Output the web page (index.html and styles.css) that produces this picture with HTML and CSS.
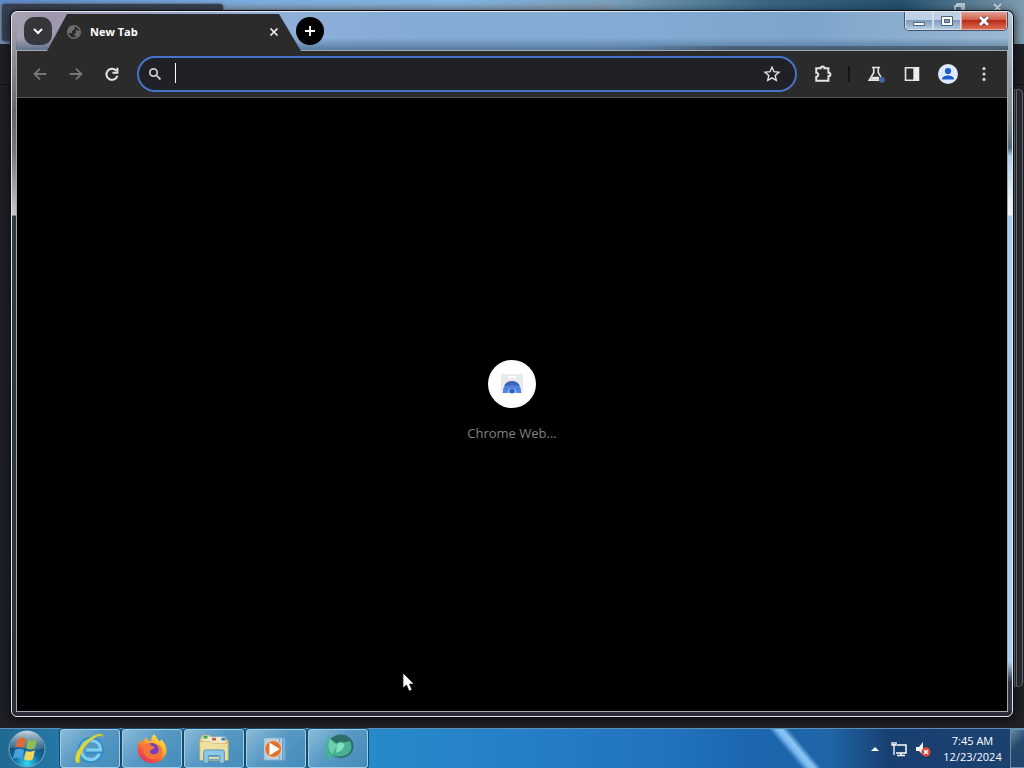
FILE: index.html
```html
<!DOCTYPE html>
<html lang="en">
<head>
<meta charset="utf-8">
<title>New Tab</title>
<link rel="stylesheet" href="styles.css">
</head>
<body>
<main class="desktop">
  <div class="back-window" aria-hidden="true">
    <div class="back-title"></div>
    <div class="back-tab"></div>
    <div class="back-line"></div>
    <svg class="back-glyphs" viewBox="0 0 60 12"><g fill="none" stroke="#d5e2ea" stroke-width="1.5"><path d="M11 10V6h7v5M13 6V4h7v7"/><path d="M50 4l7 7M57 4l-7 7"/></g></svg>
    <div class="back-edge"></div>
  </div>

  <section class="window" aria-label="Browser">
    <header class="titlebar">
      <button class="tab-search" aria-label="Search tabs"><svg viewBox="0 0 16 16"><path d="M4 6l4 4 4-4" fill="none" stroke="#fff" stroke-width="2"/></svg></button>
      <div class="tab">
        <svg class="globe" viewBox="0 0 16 16"><circle cx="8" cy="8" r="6.300" fill="none" stroke="#6d6d6d" stroke-width="1.500"/><path d="M2 5l4-3 3 1-1 3-2 1v2H2zM10 6l4 1-1 5-3 1-2-3 2-1z" fill="#6d6d6d"/></svg>
        <span class="tab-title">New Tab</span>
        <button class="tab-close" aria-label="Close tab"><svg viewBox="0 0 16 16"><path d="M4.500 4.500l7 7M11.500 4.500l-7 7" stroke="#f1f1f1" stroke-width="1.700"/></svg></button>
      </div>
      <button class="new-tab" aria-label="New tab"><svg viewBox="0 0 16 16"><path d="M8 3v10M3 8h10" stroke="#fff" stroke-width="1.800"/></svg></button>
      <div class="controls">
        <button class="ctl minimize" aria-label="Minimize"><svg viewBox="0 0 16 14"><path d="M2.500 8.500h11v3h-11z" fill="#fff" stroke="#4b617d"/></svg></button>
        <button class="ctl maximize" aria-label="Maximize"><svg viewBox="0 0 16 14"><path d="M2.500 2.500h11v9h-11z" fill="#fff" stroke="#4b617d"/><path d="M5.500 5.500h5v3h-5z" fill="#89a2bc" stroke="#4b617d"/></svg></button>
        <button class="ctl close" aria-label="Close"><svg viewBox="0 0 16 14"><path d="M4 3l8 8M12 3l-8 8" stroke="#653438" stroke-width="4.500"/><path d="M4 3l8 8M12 3l-8 8" stroke="#fff" stroke-width="2.800"/></svg></button>
      </div>
    </header>
    <div class="client">
      <nav class="toolbar" aria-label="Browser toolbar">
        <button class="tool dim" aria-label="Back"><svg viewBox="0 0 20 20"><path d="M17 10H4M10 4L4 10l6 6"/></svg></button>
        <button class="tool dim" aria-label="Forward"><svg viewBox="0 0 20 20"><path d="M3 10h13M10 4l6 6-6 6"/></svg></button>
        <button class="tool" aria-label="Reload"><svg viewBox="0 0 20 20"><path class="bold" d="M15 6.500A6.200 6.200 0 1 0 16 12"/><path class="bold" d="M16 3v5.500h-5.500"/></svg></button>
        <div class="omnibox">
          <svg class="lens" viewBox="0 0 16 16"><circle cx="6.500" cy="6.500" r="3.700"/><path d="M9.200 9.200l4.300 4.300"/></svg>
          <input class="address" type="text" aria-label="Address and search bar">
          <button class="star" aria-label="Bookmark this tab"><svg viewBox="0 0 20 20"><path d="M10 3.200l2 4.500 5 .5-3.800 3.300 1.100 4.900L10 13.900l-4.300 2.500 1.100-4.900L3 8.200l5-.5z"/></svg></button>
        </div>
        <button class="tool" aria-label="Extensions"><svg viewBox="0 0 20 20"><path class="bold" d="M2.500 3.500h5c0-2.500 4-2.500 4 0h4.500v5c3 0 3 4 0 4v5H2.500v-4.500c3 0 3-4.500 0-4.500z"/></svg></button>
        <span class="divider"></span>
        <button class="tool" aria-label="Labs"><svg viewBox="0 0 20 20"><path d="M5.500 2.800h9M7.500 3v5.500L2.500 16.800h11M12.500 3v5.500l3 5"/><path d="M6 13h7l1 3H4z" fill="#e5e5e5" stroke="none"/><circle cx="16.500" cy="16.500" r="3.300" fill="#42699e" stroke="none"/></svg></button>
        <button class="tool" aria-label="Side panel"><svg viewBox="0 0 20 20"><path d="M2.800 3h14.400v14H2.800z"/><path d="M11.500 3h6v14h-6z" fill="#eee" stroke="none"/></svg></button>
        <button class="tool profile" aria-label="Profile"><svg viewBox="0 0 20 20"><circle cx="10" cy="10" r="10" fill="#dce8fb" stroke="none"/><circle cx="10" cy="7" r="3.100" fill="#1b5ccf" stroke="none"/><path d="M4 15.500c0-5.500 12-5.500 12 0z" fill="#1b5ccf" stroke="none"/></svg></button>
        <button class="tool" aria-label="Menu"><svg viewBox="0 0 20 20"><g fill="#d5d5d5" stroke="none"><circle cx="10" cy="4" r="1.800"/><circle cx="10" cy="10" r="1.800"/><circle cx="10" cy="16" r="1.800"/></g></svg></button>
      </nav>
      <div class="page">
        <a class="shortcut" href="#">
          <span class="shortcut-icon"><svg viewBox="0 0 24 24"><path d="M1 2h22v19H1z" fill="#e9eaed"/><path d="M8 4h8v2H8z" fill="#fff"/><path d="M3 21v-2a9 9 0 0 1 18 0v2z" fill="#4f7fe0"/><path d="M4 14a9 9 0 0 1 16 0l-8-1z" fill="#3c62b0"/><path d="M7 21a5 5 0 0 1 10 0z" fill="#8aaef0"/><circle cx="12" cy="19" r="2.500" fill="#2a5fce"/></svg></span>
          <span class="shortcut-label">Chrome Web...</span>
        </a>
      </div>
    </div>
  </section>

  <svg class="cursor" viewBox="0 0 12 20" aria-hidden="true"><path d="M1 1v15l3.500-3 2.500 6 3-1.300-2.500-5.700H12z" fill="#fff" stroke="#111" stroke-width=".7"/></svg>
</main>

<footer class="taskbar">
  <button class="start" aria-label="Start">
    <svg viewBox="0 0 38 38">
      <defs>
        <radialGradient id="orb" cx=".5" cy=".9" r=".8"><stop offset="0" stop-color="#35d6f5"/><stop offset=".45" stop-color="#126a9f"/><stop offset="1" stop-color="#123f63"/></radialGradient>
        <linearGradient id="gloss" x2="0" y2="1"><stop offset="0" stop-color="#e6f1f6" stop-opacity=".85"/><stop offset="1" stop-color="#a6bfca" stop-opacity=".2"/></linearGradient>
      </defs>
      <circle cx="19" cy="19" r="18" fill="url(#orb)" stroke="#75a9c4"/>
      <path d="M2 18a17 17 0 0 1 34 0c-10 5-24-3-34 0z" fill="url(#gloss)"/>
      <path d="M10 9c3-2 6-1 8 0l-2 9c-3-2-6-1-9 0z" fill="#e06a35"/>
      <path d="M20 10c3 1 6 1 9-1l-2 9c-3 2-6 2-9 0z" fill="#8ebc55"/>
      <path d="M7 20c3-2 6-2 9 0l-2 9c-3-2-6-2-9 0z" fill="#4aa2dd"/>
      <path d="M18 21c3 1 6 1 9-1l-2 9c-3 2-6 2-9 0z" fill="#f5d65b"/>
    </svg>
  </button>
  <div class="apps">
    <button class="app" aria-label="Internet Explorer"><svg viewBox="0 0 34 34"><path d="M28 22c-2 5-6 7-10 7-6 0-11-5-11-11S12 7 18 7s11 5 11 12H13" fill="none" stroke="#2f8fcb" stroke-width="6"/><path d="M27 22c-2 4-5 6-9 6-6 0-10-4-10-10S12 8 18 8s10 4 10 10H13" fill="none" stroke="#83cff0" stroke-width="3.500"/><path d="M3 32c-6-6 5-24 20-30 5-2 8-1 8 2-2-2-5-1-9 1C12 11 5 23 6 31z" fill="#ddd83c" stroke="#b5b447" stroke-width=".6"/></svg></button>
    <button class="app" aria-label="Firefox"><svg viewBox="0 0 34 34"><defs><linearGradient id="fire" x1=".85" y1="0" x2=".2" y2="1"><stop offset="0" stop-color="#fff24a"/><stop offset=".4" stop-color="#ffac2c"/><stop offset=".7" stop-color="#f45a3c"/><stop offset="1" stop-color="#dc3066"/></linearGradient></defs><path d="M19 1c3 3 3 5 6 8l2-2c4 4 6 9 5 14-2 7-8 11-15 11S3 27 2 20C1 14 3 9 5 6c0 2 1 3 2 4l4-6c0 3 2 4 5 5 0-3 1-6 3-8z" fill="url(#fire)"/><circle cx="17" cy="18" r="7.500" fill="#7540bf"/><path d="M7 14c3-4 7-3 9-1l4 2c-1 3-5 2-5 5s5 4 8 1c2-3 1-8-2-9 7 1 9 8 5 13-7 7-20 1-19-11z" fill="#f4753a"/></svg></button>
    <button class="app" aria-label="Windows Explorer"><svg viewBox="0 0 34 34"><path d="M3 5l2-3h7l2 3h15l3 3v20H2V7z" fill="#dfc77b"/><path d="M5 4h24v8H5z" fill="#f0edcf"/><path d="M6 3h4v3H6z" fill="#41a35a"/><path d="M15 5h4v3h-4z" fill="#c9584c"/><path d="M25 5h4v3h-4z" fill="#3c7fc8"/><path d="M2 9h11l2 2h17v18H2z" fill="#ede09f" stroke="#cfb05e" stroke-width=".7"/><path d="M6 32V20q0-2 2-2h18q2 0 2 2v12h-5v-8H11v8z" fill="#8fc8e6" stroke="#538fb8"/><path d="M12 25h10M12 28h10" stroke="#4d9bcc"/></svg></button>
    <button class="app" aria-label="Windows Media Player"><svg viewBox="0 0 34 34"><path d="M10 5h17v24H10z" fill="#7db4df" stroke="#5e9bc9"/><path d="M7 5h17v24H7z" fill="#b9d8ee" stroke="#5f97bf"/><path d="M4 5h17v24H4z" fill="#b5cfe2" stroke="#699dc4"/><circle cx="14" cy="17" r="9" fill="#df7430" stroke="#f4d2b4"/><path d="M10 10l11 7-11 7z" fill="#fff"/></svg></button>
    <button class="app" aria-label="Green bird application"><svg viewBox="0 0 34 34"><ellipse cx="20" cy="14" rx="13.500" ry="12.500" fill="#2c6e69"/><path d="M7 4c3 3 6 6 9 7 2-2 5-3 7-1 2 0 4-2 7-1 3 6 1 13-6 15-5 2-10 1-13-1l-2 7-4-7-2 4V16z" fill="#48b094"/><path d="M8 6l8 7-5 9c-4-3-5-9-3-16z" fill="#6cd0b0"/><path d="M16 12c3-3 6-1 8 0-1 5-4 8-9 9z" fill="#7fe0c2"/></svg></button>
  </div>
  <div class="tray">
    <button class="tray-icon" aria-label="Show hidden icons"><svg viewBox="0 0 16 16"><path d="M4 10l4-4 4 4z" fill="#fff"/></svg></button>
    <button class="tray-icon" aria-label="Network"><svg viewBox="0 0 16 16"><path d="M6 4h9v8H5M10 12v2M6 14.500h8" fill="none" stroke="#fff" stroke-width="1.500"/><path d="M1 1v3h4V1M3 1v3M3 4v10" fill="none" stroke="#fff" stroke-width="1.300"/></svg></button>
    <button class="tray-icon" aria-label="Volume muted"><svg viewBox="0 0 16 16"><path d="M1 6h3l4-5v13l-4-4H1z" fill="#f4f4f4"/><circle cx="11" cy="11" r="4.700" fill="#d94b38"/><path d="M9 9l4 4M13 9l-4 4" stroke="#fff" stroke-width="1.500"/></svg></button>
    <div class="clock"><time>7:45 AM</time><time>12/23/2024</time></div>
    <button class="show-desktop" aria-label="Show desktop"></button>
  </div>
</footer>
</body>
</html>
```

FILE: styles.css
```css
* { box-sizing: border-box; }
html, body { height: 100%; margin: 0; }
body {
  display: flex;
  flex-direction: column;
  overflow: hidden;
  font: 11px/16px "Open Sans", "Noto Sans", sans-serif;
  background: #1b1b20;
}
button { margin: 0; padding: 0; border: 0; background: none; font: inherit; color: inherit; }
svg { display: block; flex: none; }

.desktop { position: relative; flex: 1; min-height: 0; }

/* Window behind the browser */
.back-window { position: absolute; inset: 0; background: #1e2026; overflow: hidden; }
.back-title {
  height: 44px;
  background:
    linear-gradient(180deg, transparent 2px, #8a8f9a88 8px) left / 60% 100% no-repeat,
    linear-gradient(90deg, #5d87c5, #7cacdf 25%, #7fb3e0 45%, #789eb9 60%, #396582 75%, #24506e 88%, #7f9aac);
}
.back-tab {
  position: absolute; left: 2px; top: 4px; width: 221px; height: 37px;
  background: #38404f; border-radius: 3px;
  box-shadow: 0 0 3px #38404f;
}
.back-line { position: absolute; left: 0; right: 0; top: 84px; height: 1px; background: #101217; }
.back-glyphs { position: absolute; right: 20px; top: 0; width: 60px; height: 12px; }
.back-edge {
  position: absolute; right: 1px; top: 89px; bottom: 41px; width: 9px;
  border: 1px solid #63676b; border-left: 3px double #7e8588;
  border-radius: 0 5px 5px 0; background: #292d32;
}

/* Browser window */
.window {
  position: absolute; inset: 11px;
  display: flex; flex-direction: column;
  padding: 0 4px 4px;
  border: 1px solid #e3e9ee;
  border-radius: 6px;
  box-shadow: 0 0 0 1px #0a0d12, 0 2px 8px 1px #08090ccc;
  background:
    linear-gradient(#2b2b38, #2b2b38) bottom / 100% 5px no-repeat,
    linear-gradient(180deg, #a9a5b3 0, #8c8a90 50px, #666 100px, #777 140px, #c8c8c8 203px, #303a43 204px, #2b3038) left / 5px 100% no-repeat,
    linear-gradient(180deg, #b0c8dd 0, #8f9aa4 70px, #7d8790 110px, #55697a 136px, #b1d0e8 144px, #e5f0f7 185px, #f0f5f8 203px, #a8cef0 204px, #a8cef0 650px, #343744 670px) right / 5px 100% no-repeat,
    linear-gradient(90deg, #a6a2b2 0, #a097ae 40px, #8fb0d8 270px, #83abd5 400px, #83abd3 600px, #7da5cc 800px, #9ab8d2);
}
.titlebar {
  display: flex; height: 38px; flex: none;
  background:
    linear-gradient(90deg, transparent 62%, #39424f88 72%, #39424f88) bottom / 100% 4px no-repeat,
    linear-gradient(180deg, transparent 68%, #355a7a99);
}
.tab-search {
  width: 28px; height: 28px; margin: 5px 0 0 8px;
  display: grid; place-items: center;
  border-radius: 10px; background: #35363a;
}
.tab-search svg, .new-tab svg, .tab-close svg { width: 16px; height: 16px; }
.tab {
  z-index: 1;
  width: 254px; height: 37px; margin: 2px -5px 0;
  padding: 0 19px 2px;
  display: flex; align-items: center; gap: 8px;
  background: #2b2b2b;
  clip-path: polygon(20px 0, calc(100% - 22px) 0, 100% 100%, 0 100%);
}
.globe { width: 16px; height: 16px; }
.tab-title { flex: 1; color: #fff; font-weight: 700; }
.tab-close { width: 16px; height: 16px; }
.new-tab {
  width: 28px; height: 28px; margin-top: 5px;
  display: grid; place-items: center;
  border-radius: 50%; background: #000;
}
.controls {
  display: flex; height: 19px; margin-left: auto;
  border: 1px solid #42536a; border-top: 0;
  border-radius: 0 0 5px 5px; overflow: hidden;
}
.ctl {
  width: 28px; display: grid; place-items: center;
  border: 1px solid #d4dfeb; border-top: 0;
  background: linear-gradient(#bed0e3 45%, #7f9cbb 50%, #b3c9de);
}
.ctl svg { width: 16px; height: 14px; }
.ctl.close { width: 46px; border-color: #eda99b; background: linear-gradient(#e2a197, #d3604c 45%, #b92c18 50%, #dc6b50); }

.client {
  flex: 1; min-height: 0;
  display: flex; flex-direction: column;
  border: 1px solid #a5a9b3;
}
.toolbar {
  display: flex; align-items: center; flex: none;
  height: 47px; padding: 0 5px;
  background: #2b2b2b; border-bottom: 1px solid #555;
}
.tool { width: 36px; height: 36px; display: grid; place-items: center; flex: none; }
.tool svg { width: 18px; height: 18px; }
.tool svg, .lens, .star svg { fill: none; stroke: #e5e5e5; stroke-width: 1.8px; }
.tool .bold { stroke-width: 2.2px; }
.tool.dim svg { stroke: #777; stroke-width: 2px; }
.tool.profile svg { width: 20px; height: 20px; }
.omnibox {
  flex: 1; min-width: 0; height: 36px; margin: 0 8px 0 7px; padding: 0 13px 0 8px;
  display: flex; align-items: center;
  border: 2px solid #4774c9; border-radius: 18px; background: #202126;
}
.lens { width: 16px; height: 16px; stroke: #c9c9c9; }
.address {
  flex: 1; min-width: 0; height: 28px; padding: 0 0 0 12px;
  border: 0; outline: 0; color: #fff; caret-color: #fff;
  font: 14px/20px "Open Sans", "Noto Sans", sans-serif;
  background: linear-gradient(#fff, #fff) 12px 3px / 1px 20px no-repeat;
}
.star { width: 20px; height: 20px; }
.star svg { width: 20px; height: 20px; stroke-width: 1.4px; }
.divider { width: 2px; height: 16px; margin: 0 8px 0 7px; background: #151515; }

.page {
  flex: 1; min-height: 0; padding-bottom: 8px;
  display: flex; align-items: center; justify-content: center;
  background: #000;
}
.shortcut { display: flex; flex-direction: column; align-items: center; gap: 16px; text-decoration: none; }
.shortcut-icon { width: 48px; height: 48px; display: grid; place-items: center; border-radius: 50%; background: #fff; }
.shortcut-icon svg { width: 24px; height: 24px; }
.shortcut-label { font-size: 13px; line-height: 18px; color: #7d8482; }

.cursor { position: absolute; left: 402px; top: 672px; width: 12px; height: 20px; }

/* Taskbar */
.taskbar {
  display: flex; flex: none; height: 40px;
  border-top: 1px solid #5d91b8;
  background:
    linear-gradient(50deg, transparent 38%, #78b9f0 46%, #8dc6f5 52%, transparent 60%) 766px 0 / 60px 100% no-repeat,
    linear-gradient(90deg, #216991 0, #2678a8 60px, #268bc8 370px, #267fc8 520px, #2374c0 650px, #1b66ae 760px, #2065a7 830px, #173f70 890px, #1c426f);
}
.start { width: 54px; height: 39px; display: grid; place-items: center; }
.start svg { width: 38px; height: 38px; }
.apps { display: flex; gap: 2px; margin-left: 6px; }
.app {
  width: 60px; display: grid; place-items: center;
  border: 1px solid #9fcee6; border-radius: 3px;
  box-shadow: 0 0 0 1px #184b6b;
  background: linear-gradient(135deg, #8bbbd8, #5899c4 45%, #438cba);
}
.app svg { width: 32px; height: 32px; }
.tray { display: flex; align-items: center; margin-left: auto; color: #fff; }
.tray-icon { width: 24px; height: 24px; display: grid; place-items: center; }
.tray-icon svg { width: 16px; height: 16px; }
.clock { display: flex; flex-direction: column; align-items: center; width: 75px; }
.show-desktop {
  width: 14px; align-self: stretch;
  border: 1px solid #668ca8; border-right: 0;
  background: linear-gradient(135deg, #6589a0, #25486b 45%, #20466e);
}
```
